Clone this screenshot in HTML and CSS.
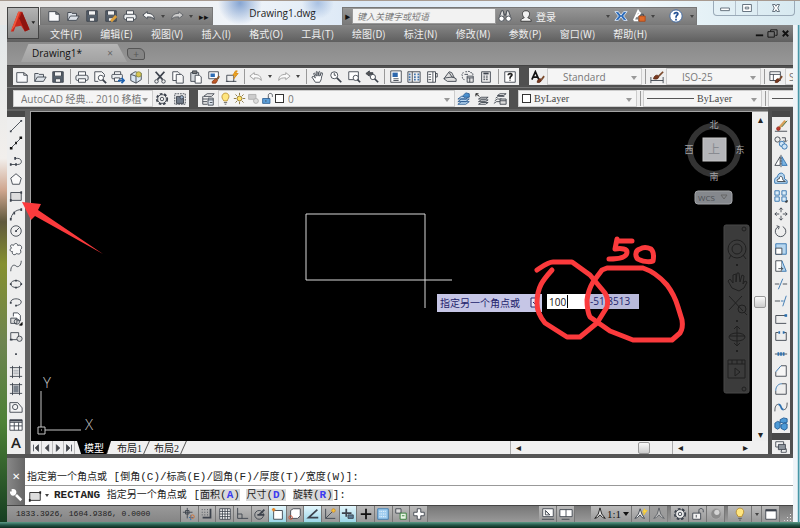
FILE: index.html
```html
<!DOCTYPE html>
<html lang="zh-CN">
<head>
    <meta charset="utf-8">
    <title>Drawing1.dwg</title>
    <link rel="stylesheet" href="styles.css">
</head>
<body>
    <!-- icon set -->
    <svg class="sprite" aria-hidden="true">
        <symbol id="new" viewBox="0 0 16 16"><path d="M2 3h8l4 3v8H2zM10 3v3h4" fill="#f7f8fa"/></symbol>
        <symbol id="open" viewBox="0 0 16 16"><path d="M2 13V4h4l1 1h5v3M2 13l3-5h10l-3 5z" fill="#dde2e8"/></symbol>
        <symbol id="save" viewBox="0 0 16 16"><path d="M2 2h12v12H2z" fill="#56616d"/><path d="M4 2h8v5H4zM5 10h6v4H5z" fill="#f4f4f4"/></symbol>
        <symbol id="saveas" viewBox="0 0 16 16"><path d="M2 2h12v12H2z" fill="#56616d"/><path d="M4 2h8v5H4zM5 10h6v4H5z" fill="#f4f4f4"/><path d="M8 14l6-6" stroke="#e0a13b" stroke-width="3"/></symbol>
        <symbol id="print" viewBox="0 0 16 16"><path d="M4 6V2h8v4" fill="#fff"/><rect x="1" y="6" width="14" height="6" rx="2" fill="#eceef0"/><path d="M4 10h8v4H4z" fill="#fff"/></symbol>
        <symbol id="preview" viewBox="0 0 16 16"><path d="M6 13H2V2h8l3 3v3" fill="#f8f8f8"/><circle cx="9" cy="9" r="3" fill="#fff"/><path d="M11 11l4 4" stroke-width="2"/></symbol>
        <symbol id="publish" viewBox="0 0 16 16"><path d="M4 5V2h7v3" fill="#fff"/><rect x="1" y="5" width="12" height="5" rx="1" fill="#eceef0"/><path d="M4 9h6v4H4z" fill="#fff"/><path d="M8 12h6M12 9l3 3-3 3" stroke="#1f62b0" stroke-width="2"/></symbol>
        <symbol id="dwf" viewBox="0 0 16 16"><path d="M2 5l5-3 7 2v7l-6 4-6-3z" fill="#dbe7f2"/><path d="M2 5l6 2v8M8 7l6-3"/><circle cx="11" cy="5" r="3" fill="#d9c552" stroke="#8a8f4a"/></symbol>
        <symbol id="cut" viewBox="0 0 16 16"><path d="M3 2l8 9M13 2L5 11" stroke-width="2"/><circle cx="4" cy="13" r="2"/><circle cx="12" cy="13" r="2"/></symbol>
        <symbol id="copy" viewBox="0 0 16 16"><path d="M2 2h6l2 2v8H2z" fill="#fff"/><path d="M6 5h6l2 2v8H6z" fill="#f6f6f6"/></symbol>
        <symbol id="paste" viewBox="0 0 16 16"><path d="M2 3h9v10H2z" fill="#d4d8dc"/><path d="M4 1h5v3H4z" fill="#777"/><path d="M7 6h5l2 2v7H7z" fill="#fff"/></symbol>
        <symbol id="match" viewBox="0 0 16 16"><path d="M2 2h11v8H2z" fill="#fff"/><path d="M4 4h5v4H4z" fill="#2e6db4" stroke="none"/><path d="M6 13l4-3 2 2-2 3H6z" fill="#c25a28" stroke="#8a3d18"/><path d="M11 11l3-4" stroke="#8a5a30" stroke-width="2"/></symbol>
        <symbol id="blocked" viewBox="0 0 16 16"><path d="M2 6h8v7H2zM1 13h3M9 13h4"/><path d="M12 1l-3 5h3l-2 4 5-6h-3l2-3z" fill="#f3a81e" stroke="#d88b14"/></symbol>
        <symbol id="undo" viewBox="0 0 16 16"><path d="M1 7l5-4v2c5 0 8 2 8 7-2-3-4-3-8-3v2z" fill="#fafafa"/></symbol>
        <symbol id="redo" viewBox="0 0 16 16"><path d="M15 7l-5-4v2c-5 0-8 2-8 7 2-3 4-3 8-3v2z" fill="#fafafa"/></symbol>
        <symbol id="pan" viewBox="0 0 16 16"><path d="M5 14L1 8c1-1 2-1 4 1L3 4c1-1 2 0 3 3V2c1-1 2 0 2 5l1-5c1-1 2 0 1 5l2-4c2 0 1 2 0 5 0 3-1 4-2 6z" fill="#fff"/></symbol>
        <symbol id="zoom" viewBox="0 0 16 16"><circle cx="6" cy="6" r="4" fill="#fff"/><path d="M6 3v3h2"/><path d="M9 9l5 5" stroke-width="2"/></symbol>
        <symbol id="zoomwin" viewBox="0 0 16 16"><path d="M2 2h11v9H2z" fill="#fff"/><circle cx="10" cy="9" r="3" fill="#fff"/><path d="M12 11l3 3" stroke-width="2"/></symbol>
        <symbol id="zoomprev" viewBox="0 0 16 16"><path d="M1 4l4-3v2h4v2H5v2z" fill="#555"/><circle cx="9" cy="8" r="3" fill="#fff"/><path d="M11 10l4 4" stroke-width="2"/></symbol>
        <symbol id="props" viewBox="0 0 16 16"><path d="M2 1h12v13H2z" fill="#fff"/><path d="M4 3h6v5H4z" fill="#2d67ac" stroke="none"/><path d="M5 10h6M5 12h6"/></symbol>
        <symbol id="dcenter" viewBox="0 0 16 16"><path d="M1 2h14v12H1zM6 2v12"/><path d="M3 4v8" stroke="#4477b0" stroke-dasharray="2 1" stroke-width="2"/><path d="M8 5h2M12 5h2M8 8h2M12 8h2M8 11h2M12 11h2" stroke="#4477b0" stroke-width="2"/></symbol>
        <symbol id="palette" viewBox="0 0 16 16"><path d="M3 2h9v12H3z" fill="#fff"/><path d="M9 2v12M4 5h3M4 8h3M4 11h3M12 4h2v4h-2z"/></symbol>
        <symbol id="sheet" viewBox="0 0 16 16"><path d="M1 10l6-8 3 1 3 6M1 10l4 3h10v-3l-4-2-8 1z" fill="#ddd"/><path d="M7 3l4 6"/></symbol>
        <symbol id="markup" viewBox="0 0 16 16"><path d="M5 2h2c2-1 4 0 4 1 3 0 3 2 2 4M3 3C0 4 1 6 2 7c-1 2 0 4 2 4" stroke-dasharray="2 1"/><path d="M7 7h7v7H7zM7 9h7M10 9v5M4 5h4" fill="#e5e5e5"/></symbol>
        <symbol id="calc" viewBox="0 0 16 16"><path d="M3 2h10v12H3z" fill="#eee"/><path d="M5 4h6" stroke-width="2"/><path d="M5 7h6M5 9h6M5 11h6" stroke-dasharray="2 1"/></symbol>
        <symbol id="help" viewBox="0 0 16 16"><path d="M2 2h12v12H2z" fill="#fff"/><path d="M6 6c0-3 5-2 4 0-1 2-2 1-2 4M8 11v1" stroke="#222" stroke-width="2"/></symbol>
        <symbol id="textstyle" viewBox="0 0 16 16"><path d="M1 11L5 2l4 9M2 8h6" stroke="#111" stroke-width="2"/><path d="M7 14c1-4 3-5 5-3 0 2-2 4-5 3z" fill="#7b3a20" stroke="#5a2815"/><path d="M12 11l3-4" stroke="#7b4a2c" stroke-width="2"/></symbol>
        <symbol id="dimstyle" viewBox="0 0 16 16"><path d="M1 8v7M15 8v7M1 12h14"/><path d="M4 10c1-4 4-5 6-3 0 3-2 4-6 3z" fill="#7b3a20" stroke="#5a2815"/><path d="M10 7l5-5" stroke="#7b4a2c" stroke-width="2"/></symbol>
        <symbol id="tabstyle" viewBox="0 0 16 16"><path d="M1 2h12v10H1zM1 5h12M5 5v7" fill="#fff"/><path d="M7 14c1-4 3-5 5-3 0 2-2 4-5 3z" fill="#7b3a20" stroke="#5a2815"/><path d="M12 11l3-4" stroke="#7b4a2c" stroke-width="2"/></symbol>
        <symbol id="gear" viewBox="0 0 16 16"><circle cx="8" cy="8" r="6" stroke-width="2" stroke-dasharray="3 2"/><circle cx="8" cy="8" r="5" fill="#eee"/><circle cx="8" cy="8" r="2"/></symbol>
        <symbol id="wsave" viewBox="0 0 16 16"><path d="M2 2h12v12H2z" stroke-dasharray="2 1"/><path d="M4 5h5l3 2v6H4z" fill="#707a88"/><circle cx="10" cy="6" r="2" fill="#9fb3cb"/></symbol>
        <symbol id="layers" viewBox="0 0 16 16"><path d="M3 5l4-3h8l-3 3zM2 5v9h5M2 8h5M2 11h5" fill="#eee"/><path d="M8 7h6v8H8zM8 9h6M10 12h3" fill="#dfe7f0"/></symbol>
        <symbol id="bulb" viewBox="0 0 16 16"><path d="M6 11C4 8 3 7 4 4c2-4 7-3 8 0 1 3-1 4-2 7z" fill="#ffe680" stroke="#b58a2c"/><path d="M6 13h4M7 15h2" stroke="#555"/></symbol>
        <symbol id="sun" viewBox="0 0 16 16"><circle cx="8" cy="8" r="3" fill="#ffe36a" stroke="#8a6d20"/><path d="M8 1v3M8 12v3M1 8h3M12 8h3M3 3l2 2M11 11l2 2M13 3l-2 2M5 11l-2 2" stroke="#7a6525"/></symbol>
        <symbol id="freeze" viewBox="0 0 16 16"><path d="M2 3h9v6H2z" fill="#ccc" stroke="#aaa"/><circle cx="11" cy="11" r="3" fill="#ddd" stroke="#aaa"/></symbol>
        <symbol id="unlock" viewBox="0 0 16 16"><path d="M2 8h9v6H2z" fill="#5ea0da" stroke="#2a5c90"/><path d="M9 8V4c0-3 5-3 5 0v2M6 10v2"/></symbol>
        <symbol id="padlock" viewBox="0 0 16 16"><path d="M2 7h9v7H2z" fill="#f2f2f2"/><path d="M9 7V4c0-3 5-3 5 0v2M6 9v3"/></symbol>
        <symbol id="laycur" viewBox="0 0 16 16"><path d="M1 8l4-3h9l-4 3zM1 11l4-3h9l-4 3zM1 14l4-3h9l-4 3z" fill="#bcd9f2" stroke="#2b5d94"/><path d="M7 4l3-3 4 1v4H8z" fill="#4b91cf" stroke="#2b5d94"/></symbol>
        <symbol id="layprev" viewBox="0 0 16 16"><path d="M4 8l3-2h8l-3 2zM4 11l3-2h8l-3 2zM4 14l3-2h8l-3 2z" fill="#eee"/><path d="M1 2l4 3M1 2h3M1 2v3" stroke="#111"/></symbol>
        <symbol id="laystate" viewBox="0 0 16 16"><path d="M5 4l3-2h7l-3 2zM3 7l3-2h7M2 10l3-2h5M1 13l3-2h4" fill="#eee"/><path d="M8 8h7v6H8zM8 10h7" fill="#ddd"/></symbol>

        <symbol id="line" viewBox="0 0 16 16"><path d="M2 14L14 2"/><path d="M1 14h2M13 2h2" stroke-width="2"/></symbol>
        <symbol id="xline" viewBox="0 0 16 16"><path d="M2 14L14 2"/><path d="M1 14h3M7 8h2M12 2h3" stroke-width="3" stroke="#111"/></symbol>
        <symbol id="pline" viewBox="0 0 16 16"><path d="M2 12h8c6 0 5-7 0-7H7"/><path d="M1 12h2M7 12h2M6 5h2" stroke-width="3"/></symbol>
        <symbol id="polygon" viewBox="0 0 16 16"><path d="M8 2l6 5-2 7H4L2 7z" fill="#fafafa"/></symbol>
        <symbol id="rect" viewBox="0 0 16 16"><path d="M2 4h12v9H2z" fill="#ddd"/><path d="M1 13h2M13 4h2" stroke-width="3"/></symbol>
        <symbol id="arc" viewBox="0 0 16 16"><path d="M2 14C3 8 7 3 14 3"/><path d="M1 14h2M5 7h2M13 3h2" stroke-width="3"/></symbol>
        <symbol id="circle" viewBox="0 0 16 16"><circle cx="8" cy="8" r="6"/><path d="M8 8l4-4"/><path d="M7 8h2" stroke-width="2"/></symbol>
        <symbol id="cloud" viewBox="0 0 16 16"><path d="M5 4c1-3 5-3 5 0 4-2 6 3 3 5 2 4-2 6-4 4-3 3-6 1-5-2C0 11 1 7 3 7 0 4 3 2 5 4z" fill="#fafafa"/></symbol>
        <symbol id="spline" viewBox="0 0 16 16"><path d="M2 14c0-7 4-8 6-6s6 0 6-6"/></symbol>
        <symbol id="ellipse" viewBox="0 0 16 16"><ellipse cx="8" cy="8" rx="6" ry="4"/><path d="M1 8h2M13 8h2M8 3v2M7 12h2" stroke-width="2"/></symbol>
        <symbol id="elarc" viewBox="0 0 16 16"><path d="M2 9c-1-6 12-6 12-1 0 3-4 4-6 4"/><path d="M1 9h2M7 12h2" stroke-width="2"/></symbol>
        <symbol id="insert" viewBox="0 0 16 16"><path d="M5 5V1h5l3 3v6H9" fill="#fff"/><path d="M2 7h7v6H2z" fill="#ddd"/><circle cx="9" cy="11" r="3"/><path d="M12 15h3v-3z" fill="#111" stroke="#111"/></symbol>
        <symbol id="mkblock" viewBox="0 0 16 16"><path d="M2 3h9v8H2z" fill="#eee"/><circle cx="12" cy="10" r="3" fill="#ddd"/><path d="M1 11h3" stroke-width="2"/></symbol>
        <symbol id="point" viewBox="0 0 16 16"><path d="M7 8h2" stroke-width="2"/></symbol>
        <symbol id="hatch" viewBox="0 0 16 16"><path d="M4 1v14M12 1v14M1 3h14M1 13h14"/><path d="M5 6h6M5 8h6M5 10h6" stroke="#9aa0a8"/></symbol>
        <symbol id="gradient" viewBox="0 0 16 16"><path d="M4 1v14M12 1v14M1 3h14M1 13h14"/><path d="M5 4h6v8H5z" fill="#7a828c" stroke="none"/></symbol>
        <symbol id="region" viewBox="0 0 16 16"><path d="M1 14V3h9l5 6v5z" fill="#f4f4f4"/><circle cx="7" cy="8" r="3"/></symbol>
        <symbol id="table" viewBox="0 0 16 16"><path d="M1 2h14v12H1zM1 5h14M1 9h14M6 5v9M11 5v9" fill="#fff"/><path d="M1 3h14" stroke-width="2"/></symbol>

        <symbol id="erase" viewBox="0 0 16 16"><path d="M1 14h14"/><path d="M6 10l7-8" stroke="#d8a05a" stroke-width="3"/><path d="M9 9l6-7" stroke="#3c6b3a"/><circle cx="5" cy="11" r="2" fill="#c4392b" stroke="#8c2b20"/></symbol>
        <symbol id="mcopy" viewBox="0 0 16 16"><circle cx="4" cy="4" r="3"/><circle cx="9" cy="9" r="3" fill="#cfe4f5" stroke="#2d6fad"/><circle cx="12" cy="12" r="3" fill="#cfe4f5" stroke="#2d6fad"/><path d="M9 2h4v4M11 5l2 2 2-2"/></symbol>
        <symbol id="mirror" viewBox="0 0 16 16"><path d="M7 3v10H1z" fill="#fff"/><path d="M9 3v10h6z" fill="#7db4e2" stroke="#2d6fad"/><path d="M8 1v14" stroke-dasharray="2 1"/></symbol>
        <symbol id="offset" viewBox="0 0 16 16"><path d="M1 14h14v-3l-3-2c1-9-8-8-8-2-3 0-4 3-3 7z" fill="#b7d6ef" stroke="#2d6fad"/><path d="M4 12h9l-3-2c0-5-4-5-4-1-2 0-3 1-2 3z" fill="#fff"/></symbol>
        <symbol id="array" viewBox="0 0 16 16"><path d="M1 2h5v5H1zM9 2h5v5H9zM1 9h5v5H1zM9 9h5v5H9z" fill="#dcecf8" stroke="#2d6fad"/><path d="M13 15h2v-2z" stroke="#111"/></symbol>
        <symbol id="move" viewBox="0 0 16 16"><path d="M8 1v5M8 10v5M1 8h5M10 8h5M6 3l2-2 2 2M6 13l2 2 2-2M3 6L1 8l2 2M13 6l2 2-2 2"/></symbol>
        <symbol id="rotate" viewBox="0 0 16 16"><path d="M5 3a6 6 0 1 0 5 0M3 2l3 1-1 3"/></symbol>
        <symbol id="scale" viewBox="0 0 16 16"><path d="M2 2h12v12H2z" fill="#b7d6ef" stroke="#2d6fad"/><path d="M2 7h7v7H2z" fill="#fff"/></symbol>
        <symbol id="stretch" viewBox="0 0 16 16"><path d="M2 2h7v12H2z" fill="#fff"/><path d="M9 2l5 12H9" fill="#b7d6ef" stroke="#2d6fad"/><path d="M5 11h5M8 9l2 2-2 2"/></symbol>
        <symbol id="trim" viewBox="0 0 16 16"><path d="M1 8h5M10 8h5"/><path d="M5 14l5-12" stroke="#2d6fad"/></symbol>
        <symbol id="extend" viewBox="0 0 16 16"><path d="M1 8h6"/><path d="M8 8h3M10 14l4-12" stroke="#2d6fad"/></symbol>
        <symbol id="breakpt" viewBox="0 0 16 16"><path d="M14 4H2v9h12"/><path d="M12 4h3" stroke="#2d6fad" stroke-width="3"/></symbol>
        <symbol id="break" viewBox="0 0 16 16"><path d="M5 4H2v9h12V4h-3"/><path d="M5 4h2M10 4h2" stroke="#2d6fad" stroke-width="3"/></symbol>
        <symbol id="join" viewBox="0 0 16 16"><path d="M1 8h14"/><path d="M5 6v4M8 6v4M11 6v4" stroke="#2d6fad" stroke-width="2"/></symbol>
        <symbol id="chamfer" viewBox="0 0 16 16"><path d="M2 14V9M8 2h6v12H2" fill="#f6f6f6"/><path d="M2 9l6-7" stroke="#2d6fad"/></symbol>
        <symbol id="fillet" viewBox="0 0 16 16"><path d="M2 14v-4M9 2h5v12H2"/><path d="M2 10c0-5 3-8 7-8" stroke="#2d6fad"/></symbol>
        <symbol id="blend" viewBox="0 0 16 16"><path d="M1 13c0-5 1-8 4-8M11 11c3 0 4-3 4-8"/><path d="M5 5c4 0 2 6 6 6" stroke="#2d6fad" stroke-width="2"/></symbol>
        <symbol id="explode" viewBox="0 0 16 16"><path d="M1 7l3-2 3 1v6l-3 2-3-2zM7 3l4-2 4 1v4l-4 1-4-1zM8 9l4-2 3 1v5l-3 2-4-2z" fill="#4e9ad6" stroke="#205a92"/></symbol>
        <symbol id="order" viewBox="0 0 16 16"><path d="M2 2h9v6H2zM9 10h5v4H8z" fill="#fff"/><path d="M5 5h8v6H5z" fill="#8d949c"/></symbol>

        <symbol id="infer" viewBox="0 0 16 16"><path d="M6 1v12M1 6h11M4 4h4v4H4z"/><path d="M10 9v6M8 12h5" stroke="#2d6fad"/><circle cx="12" cy="11" r="2" stroke="#d36b2a"/></symbol>
        <symbol id="snap" viewBox="0 0 16 16"><path d="M2 3h8M2 6h8M2 9h8" stroke-dasharray="1 2"/><path d="M12 2v10H3" stroke-width="2"/></symbol>
        <symbol id="grid" viewBox="0 0 16 16"><path d="M2 2h12v12H2zM5 2v12M8 2v12M11 2v12M2 5h12M2 8h12M2 11h12" fill="#fff"/></symbol>
        <symbol id="ortho" viewBox="0 0 16 16"><path d="M3 1v12h12M3 8h5v5"/></symbol>
        <symbol id="polar" viewBox="0 0 16 16"><circle cx="7" cy="9" r="5"/><path d="M5 9h8M7 9l6-6" stroke-width="2"/></symbol>
        <symbol id="osnap" viewBox="0 0 16 16"><path d="M3 4h10v10H3z" fill="#fff"/><path d="M1 3h4M3 1v4" stroke="#e3882c" stroke-width="2"/></symbol>
        <symbol id="osnap3" viewBox="0 0 16 16"><path d="M3 4l3-2h8v8l-3 3H3z" fill="#fff"/><circle cx="3" cy="12" r="2" stroke="#cf4c2c"/></symbol>
        <symbol id="otrack" viewBox="0 0 16 16"><path d="M13 3L3 12h11" stroke-width="2"/></symbol>
        <symbol id="ducs" viewBox="0 0 16 16"><path d="M3 2v11h11M3 13l8-8"/><circle cx="12" cy="4" r="2" fill="#f4c53a" stroke="#cf8a2c"/></symbol>
        <symbol id="dyn" viewBox="0 0 16 16"><path d="M6 2v9M1 7h11" stroke-width="2"/><path d="M8 9h6v4H8z" fill="#5a7b94"/></symbol>
        <symbol id="lwt" viewBox="0 0 16 16"><path d="M8 2v12M2 8h12" stroke="#111" stroke-width="2"/></symbol>
        <symbol id="tpy" viewBox="0 0 16 16"><path d="M2 2h12v12H2z" fill="#9fcdf0" stroke="#3a78ad"/><path d="M4 5h8M4 8h8M4 11h8" stroke="#fff" stroke-dasharray="1 1"/></symbol>
        <symbol id="qp" viewBox="0 0 16 16"><path d="M2 2h6v5H2z" fill="#ddd"/><path d="M7 7h7v7H7zM9 10h3" fill="#e9f5e6" stroke="#2f7d32"/></symbol>
        <symbol id="plus" viewBox="0 0 16 16"><path d="M6 2h4v4h4v4h-4v4H6v-4H2V6h4z" fill="#fff"/></symbol>
        <symbol id="model" viewBox="0 0 16 16"><path d="M2 2h12v9H2zM1 14h14" fill="#fff"/><path d="M5 4v5h5zM5 4l5 5"/></symbol>
        <symbol id="layouts" viewBox="0 0 16 16"><path d="M1 3h14v8H1zM8 3v8M3 14h9" fill="#fff"/></symbol>
        <symbol id="anno" viewBox="0 0 16 16"><path d="M8 1l2 7 4 5-3-1-3-3-3 3-3 1 4-5z" fill="#e8e8e8"/></symbol>
        <symbol id="annovis" viewBox="0 0 16 16"><path d="M7 2l2 6 3 5-3-1-2-3-3 3-3 1 4-5z" fill="#eee"/><path d="M12 2l-2 4h2l-1 3 4-5h-2z" fill="#ffdc4a" stroke="#f2c832"/></symbol>
        <symbol id="iso" viewBox="0 0 16 16"><circle cx="8" cy="8" r="6" fill="#8b8b8b" stroke="#aaa"/><circle cx="9" cy="6" r="3" fill="#d4d4d4" stroke="none"/></symbol>
        <symbol id="clean" viewBox="0 0 16 16"><path d="M2 3h12v11H2z" fill="#fff"/><path d="M2 4h12" stroke-width="2"/></symbol>
        <symbol id="wrench" viewBox="0 0 16 16"><path d="M8 8l6 6" stroke="#fff" stroke-width="3"/><path d="M3 1v3H1c0 4 3 6 6 4 3-3 1-7-2-7z" fill="#fff" stroke="none"/></symbol>
        <symbol id="binoc" viewBox="0 0 16 16"><path d="M2 8l2-6h2l1 6M9 8l1-6h2l2 6M7 6h2" fill="#ddd"/><circle cx="4" cy="11" r="3" fill="#fff"/><circle cx="12" cy="11" r="3" fill="#fff"/></symbol>
        <symbol id="user" viewBox="0 0 16 16"><path d="M2 14c0-3 2-3 4-4-3-3-3-8 2-8s5 5 2 8c2 1 4 1 4 4z" fill="#f2f2f2"/></symbol>
        <symbol id="exchange" viewBox="0 0 16 16"><path d="M1 3h4l3 4 3-4h4l-4 5 4 5h-4L8 9l-3 4H1l4-5z" fill="#2d6cba" stroke="#dfeafa"/></symbol>
        <symbol id="a360" viewBox="0 0 16 16"><path d="M2 13L7 2l3 5M2 13h5M5 9l5-5" stroke="#fff" stroke-width="2"/><path d="M8 8h7v6H8z" fill="#df6a2a" stroke="#a9481a"/><path d="M10 8V6h3v2"/></symbol>
        <symbol id="qmark" viewBox="0 0 16 16"><circle cx="8" cy="8" r="7" fill="#fff" stroke="#3a68a8"/><path d="M6 6c0-3 5-2 4 0-1 2-2 1-2 4M8 11v2" stroke="#245296" stroke-width="2"/></symbol>
    </svg>

    <div class="window">
        <header class="titlebar">
            <div class="quick">
                <button aria-label="新建"><svg><use href="#new"/></svg></button>
                <button aria-label="打开"><svg><use href="#open"/></svg></button>
                <button aria-label="保存"><svg><use href="#save"/></svg></button>
                <button aria-label="另存为"><svg><use href="#saveas"/></svg></button>
                <button aria-label="打印"><svg><use href="#print"/></svg></button>
                <button aria-label="放弃"><svg><use href="#undo"/></svg></button>
                <button class="drop" aria-label="放弃列表"></button>
                <button class="pale" aria-label="重做"><svg><use href="#redo"/></svg></button>
                <button class="drop" aria-label="重做列表"></button>
                <button class="more" aria-label="更多">▸▸</button>
            </div>
            <h1>Drawing1.dwg</h1>
            <div class="info">
                <button class="play" aria-label="展开">▶</button>
                <input type="text" placeholder="键入关键字或短语" aria-label="搜索">
                <button aria-label="搜索"><svg><use href="#binoc"/></svg></button>
                <button class="login"><svg><use href="#user"/></svg>登录</button>
                <button class="drop" aria-label="登录选项"></button>
                <button aria-label="Exchange"><svg><use href="#exchange"/></svg></button>
                <button aria-label="连接"><svg><use href="#a360"/></svg></button>
                <button class="drop" aria-label="连接选项"></button>
                <button class="about" aria-label="帮助"><svg><use href="#qmark"/></svg></button>
                <button class="drop" aria-label="帮助选项"></button>
            </div>
            <div class="winbtns">
                <button aria-label="最小化"><svg viewBox="0 0 16 12"><path d="M3 6h10v3H3z" fill="#fff"/></svg></button>
                <button aria-label="还原"><svg viewBox="0 0 16 12"><path d="M3 2h10v8H3zM6 5h4v2H6z" fill="#fff"/></svg></button>
                <button class="close" aria-label="关闭"><svg viewBox="0 0 16 12"><path d="M4 2h3l1 2 1-2h3l-2 4 2 4H9L8 8l-1 2H4l2-4z" fill="#fff"/></svg></button>
            </div>
        </header>
        <nav class="menubar">
            <a href="#">文件(F)</a>
            <a href="#">编辑(E)</a>
            <a href="#">视图(V)</a>
            <a href="#">插入(I)</a>
            <a href="#">格式(O)</a>
            <a href="#">工具(T)</a>
            <a href="#">绘图(D)</a>
            <a href="#">标注(N)</a>
            <a href="#">修改(M)</a>
            <a href="#">参数(P)</a>
            <a href="#">窗口(W)</a>
            <a href="#">帮助(H)</a>
            <div class="docbtns">
                <button aria-label="最小化"><svg viewBox="0 0 12 12"><path d="M2 8h8"/></svg></button>
                <button aria-label="还原"><svg viewBox="0 0 12 12"><path d="M4 4V2h7v6H9M1 4h7v6H1z" stroke-width="1"/></svg></button>
                <button aria-label="关闭"><svg viewBox="0 0 12 12"><path d="M3 3l6 6M9 3l-6 6"/></svg></button>
            </div>
        </nav>
        <button class="appbtn" aria-label="应用程序菜单">
            <svg viewBox="0 0 32 32">
                <path d="M3 25L11 4h4l8 19-5 2-4-6-6 1-2 5z" fill="#c8281c" stroke="none"/>
                <path d="M11 4h2L7 20l-4 5z" fill="#f0563c" stroke="none"/>
                <path d="M15 4l8 19-5 2-6-14z" fill="#8e1510" stroke="none"/>
                <path d="M25 14h4l-2 3z" fill="#222" stroke="none"/>
            </svg>
        </button>
        <div class="filetabs">
            <div class="filetab"><span>Drawing1*</span><button aria-label="关闭图形">×</button></div>
            <button class="addtab" aria-label="新图形">+</button>
        </div>

        <div class="bars">
            <div class="bar standard">
                <button aria-label="新建"><svg><use href="#new"/></svg></button>
                <button aria-label="打开"><svg><use href="#open"/></svg></button>
                <button aria-label="保存"><svg><use href="#save"/></svg></button>
                <i class="sep"></i>
                <button aria-label="打印"><svg><use href="#print"/></svg></button>
                <button aria-label="打印预览"><svg><use href="#preview"/></svg></button>
                <button aria-label="发布"><svg><use href="#publish"/></svg></button>
                <button aria-label="三维DWF"><svg><use href="#dwf"/></svg></button>
                <i class="sep"></i>
                <button aria-label="剪切"><svg><use href="#cut"/></svg></button>
                <button aria-label="复制"><svg><use href="#copy"/></svg></button>
                <button aria-label="粘贴"><svg><use href="#paste"/></svg></button>
                <button aria-label="特性匹配"><svg><use href="#match"/></svg></button>
                <button aria-label="块编辑器"><svg><use href="#blocked"/></svg></button>
                <i class="sep"></i>
                <button class="dim" aria-label="放弃"><svg><use href="#undo"/></svg></button>
                <button class="drop" aria-label="放弃列表"></button>
                <button class="dim" aria-label="重做"><svg><use href="#redo"/></svg></button>
                <button class="drop" aria-label="重做列表"></button>
                <i class="sep"></i>
                <button aria-label="平移"><svg><use href="#pan"/></svg></button>
                <button aria-label="实时缩放"><svg><use href="#zoom"/></svg></button>
                <button aria-label="窗口缩放"><svg><use href="#zoomwin"/></svg></button>
                <button aria-label="缩放上一个"><svg><use href="#zoomprev"/></svg></button>
                <i class="sep"></i>
                <button aria-label="特性"><svg><use href="#props"/></svg></button>
                <button aria-label="设计中心"><svg><use href="#dcenter"/></svg></button>
                <button aria-label="工具选项板"><svg><use href="#palette"/></svg></button>
                <button aria-label="图纸集"><svg><use href="#sheet"/></svg></button>
                <button aria-label="标记集"><svg><use href="#markup"/></svg></button>
                <button aria-label="计算器"><svg><use href="#calc"/></svg></button>
                <i class="sep"></i>
                <button aria-label="帮助"><svg><use href="#help"/></svg></button>
            </div>
            <div class="bar styles">
                <button aria-label="文字样式"><svg><use href="#textstyle"/></svg></button>
                <label class="combo"><select aria-label="文字样式"><option>Standard</option></select></label>
                <i class="sep"></i>
                <button aria-label="标注样式"><svg><use href="#dimstyle"/></svg></button>
                <label class="combo"><select aria-label="标注样式"><option>ISO-25</option></select></label>
                <i class="sep"></i>
                <button aria-label="表格样式"><svg><use href="#tabstyle"/></svg></button>
                <label class="combo cut"><select aria-label="表格样式"><option>Standard</option></select></label>
            </div>
        </div>
        <div class="bars second">
            <div class="bar workspace">
                <label class="combo"><select aria-label="工作空间"><option>AutoCAD 经典... 2010 移植</option></select></label>
                <button aria-label="工作空间设置"><svg><use href="#gear"/></svg></button>
                <button aria-label="我的工作空间"><svg><use href="#wsave"/></svg></button>
            </div>
            <div class="bar layer">
                <button aria-label="图层特性"><svg><use href="#layers"/></svg></button>
                <label class="combo">
                    <svg><use href="#bulb"/></svg>
                    <svg><use href="#sun"/></svg>
                    <svg><use href="#freeze"/></svg>
                    <svg><use href="#unlock"/></svg>
                    <i class="swatch"></i>
                    <select aria-label="图层"><option>0</option></select>
                </label>
                <button aria-label="置为当前"><svg><use href="#laycur"/></svg></button>
                <button aria-label="上一个图层"><svg><use href="#layprev"/></svg></button>
                <button aria-label="图层状态"><svg><use href="#laystate"/></svg></button>
            </div>
            <div class="bar props">
                <label class="combo"><i class="swatch"></i><select aria-label="颜色"><option>ByLayer</option></select></label>
                <i class="sep"></i>
                <label class="combo"><i class="stroke"></i><select aria-label="线型"><option>ByLayer</option></select></label>
                <i class="sep"></i>
                <label class="combo cut"><i class="stroke"></i><select aria-label="线宽"><option>ByLayer</option></select></label>
            </div>
        </div>

        <main class="work">
            <div class="tools draw">
                <button aria-label="直线"><svg><use href="#line"/></svg></button>
                <button aria-label="构造线"><svg><use href="#xline"/></svg></button>
                <button aria-label="多段线"><svg><use href="#pline"/></svg></button>
                <button aria-label="多边形"><svg><use href="#polygon"/></svg></button>
                <button aria-label="矩形"><svg><use href="#rect"/></svg></button>
                <button aria-label="圆弧"><svg><use href="#arc"/></svg></button>
                <button aria-label="圆"><svg><use href="#circle"/></svg></button>
                <button aria-label="修订云线"><svg><use href="#cloud"/></svg></button>
                <button aria-label="样条曲线"><svg><use href="#spline"/></svg></button>
                <button aria-label="椭圆"><svg><use href="#ellipse"/></svg></button>
                <button aria-label="椭圆弧"><svg><use href="#elarc"/></svg></button>
                <button aria-label="插入块"><svg><use href="#insert"/></svg></button>
                <button aria-label="创建块"><svg><use href="#mkblock"/></svg></button>
                <button aria-label="点"><svg><use href="#point"/></svg></button>
                <button aria-label="图案填充"><svg><use href="#hatch"/></svg></button>
                <button aria-label="渐变色"><svg><use href="#gradient"/></svg></button>
                <button aria-label="面域"><svg><use href="#region"/></svg></button>
                <button aria-label="表格"><svg><use href="#table"/></svg></button>
                <button class="mtext" aria-label="多行文字">A</button>
            </div>

            <section class="view">
                <div class="canvas">
                    <svg class="drawing" viewBox="31 112 721 329" width="721" height="329">
                        <path d="M306 214h119v66H306zM425 280h27M425 280v28" stroke="#d8d8d8"/>
                        <path d="M41 391v36M45 430h36M38 427h7v7h-7zM41 430h1" stroke="#c4c4c4"/>
                        <text x="43" y="388" font-size="15" font-weight="300" fill="#c4c4c4">Y</text>
                        <text x="85" y="430" font-size="15" font-weight="300" fill="#c4c4c4">X</text>
                        <!-- view cube -->
                        <circle cx="714" cy="150" r="24" stroke="#333" stroke-width="6"/>
                        <rect x="703" y="138" width="23" height="23" fill="#b4b5b9" stroke="#c8c8c8"/>
                        <g font-size="9" fill="#a4a4a4" text-anchor="middle">
                            <text x="714" y="128">北</text>
                            <text x="689" y="153">西</text>
                            <text x="740" y="153">东</text>
                            <text x="714" y="180">南</text>
                            <text x="714" y="154" font-size="12" fill="#888a90">上</text>
                        </g>
                        <rect x="695" y="191" width="37" height="13" rx="3" fill="#85888d" stroke="#a3a5a8"/>
                        <text x="698" y="201" font-size="8" fill="#4b4e52">WCS</text>
                        <path d="M721 195h6l-3 4z" stroke="#666"/>
                        <!-- navigation bar -->
                        <rect x="724" y="225" width="25" height="168" rx="2" fill="#3b3b3b" stroke="#484848"/>
                        <g stroke="#202020">
                            <circle cx="744" cy="229" r="2"/>
                            <circle cx="737" cy="249" r="9"/><circle cx="737" cy="249" r="5"/><path d="M731 255l-2 4M743 255l3 4"/>
                            <path d="M737 264v2M737 320v2M737 350v2" stroke-width="2"/>
                            <path d="M732 288l-4-7 2-2 3 4v-8l3-1v8l1-9h2l1 9 2-7 2 1-1 8 2-3 2 1-3 6-5 3z"/>
                            <path d="M729 296l14 15M742 296l-13 14"/><circle cx="742" cy="309" r="4"/><path d="M744 312l3 3"/>
                            <path d="M737 326v20M729 336h16M734 329l3-3 3 3M734 343l3 3 3-3"/><ellipse cx="737" cy="337" rx="8" ry="4"/>
                            <path d="M728 360h17v18h-17zM728 364h17M732 360v4M737 360v4M742 360v4M735 368l5 4-5 4z"/>
                            <circle cx="744" cy="389" r="2"/>
                        </g>
                    </svg>
                    <div class="dynamic">
                        <span class="prompt">指定另一个角点或 <svg viewBox="0 0 10 12"><path d="M1 1h7v9H1zM3 5l2 2 2-2" fill="#e6e6f6"/></svg></span>
                        <input type="text" value="100" aria-label="宽度">
                        <i class="caret"></i>
                        <output>-51.8513</output>
                    </div>
                </div>
                <div class="vscroll">
                    <button aria-label="向上">▴</button>
                    <i class="thumb"></i>
                    <button aria-label="向下">▾</button>
                </div>
                <div class="layouts">
                    <div class="steps">
                        <button aria-label="第一个"><svg viewBox="0 0 12 12"><path d="M3 2v8"/><path d="M9 2v8L5 6z" fill="#444"/></svg></button>
                        <button aria-label="上一个"><svg viewBox="0 0 12 12"><path d="M8 2v8L4 6z" fill="#444"/></svg></button>
                        <button aria-label="下一个"><svg viewBox="0 0 12 12"><path d="M4 2v8l4-4z" fill="#444"/></svg></button>
                        <button aria-label="最后一个"><svg viewBox="0 0 12 12"><path d="M9 2v8"/><path d="M3 2v8l4-4z" fill="#444"/></svg></button>
                    </div>
                    <button class="ltab on">模型</button>
                    <button class="ltab">布局1</button>
                    <button class="ltab">布局2</button>
                    <div class="hscroll">
                        <button aria-label="向左">◂</button>
                        <i class="thumb"></i>
                    </div>
                    <div class="hscroll end">
                        <button aria-label="向左">◂</button>
                        <button aria-label="向右">▸</button>
                    </div>
                </div>
            </section>

            <div class="right">
                <div class="tools modify">
                    <button aria-label="删除"><svg><use href="#erase"/></svg></button>
                    <button aria-label="复制"><svg><use href="#mcopy"/></svg></button>
                    <button aria-label="镜像"><svg><use href="#mirror"/></svg></button>
                    <button aria-label="偏移"><svg><use href="#offset"/></svg></button>
                    <button aria-label="阵列"><svg><use href="#array"/></svg></button>
                    <button aria-label="移动"><svg><use href="#move"/></svg></button>
                    <button aria-label="旋转"><svg><use href="#rotate"/></svg></button>
                    <button aria-label="缩放"><svg><use href="#scale"/></svg></button>
                    <button aria-label="拉伸"><svg><use href="#stretch"/></svg></button>
                    <button aria-label="修剪"><svg><use href="#trim"/></svg></button>
                    <button aria-label="延伸"><svg><use href="#extend"/></svg></button>
                    <button aria-label="打断于点"><svg><use href="#breakpt"/></svg></button>
                    <button aria-label="打断"><svg><use href="#break"/></svg></button>
                    <button aria-label="合并"><svg><use href="#join"/></svg></button>
                    <button aria-label="倒角"><svg><use href="#chamfer"/></svg></button>
                    <button aria-label="圆角"><svg><use href="#fillet"/></svg></button>
                    <button aria-label="光顺曲线"><svg><use href="#blend"/></svg></button>
                    <button aria-label="分解"><svg><use href="#explode"/></svg></button>
                </div>
                <div class="tools order">
                    <button aria-label="绘图次序"><svg><use href="#order"/></svg></button>
                </div>
            </div>
        </main>

        <section class="command">
            <div class="grip">
                <button aria-label="关闭">✕</button>
                <button aria-label="自定义"><svg><use href="#wrench"/></svg></button>
            </div>
            <div class="lines">
                <p class="history"><b>指定第一个角点或</b> [<b>倒角</b>(C)/<b>标高</b>(E)/<b>圆角</b>(F)/<b>厚度</b>(T)/<b>宽度</b>(W)]:</p>
                <p class="current"><svg><use href="#rect"/></svg><i class="drop"></i><span><strong>RECTANG</strong> <b>指定另一个角点或</b> [<a href="#"><b>面积</b>(<em>A</em>)</a> <a href="#"><b>尺寸</b>(<em>D</em>)</a> <a href="#"><b>旋转</b>(<em>R</em>)</a>]:</span></p>
            </div>
        </section>

        <footer class="status">
            <span class="coords">1833.3926, 1604.9386, 0.0000</span>
            <div class="toggles modes">
                <button aria-label="推断约束"><svg><use href="#infer"/></svg></button>
                <button aria-label="捕捉"><svg><use href="#snap"/></svg></button>
                <button aria-label="栅格"><svg><use href="#grid"/></svg></button>
                <button aria-label="正交"><svg><use href="#ortho"/></svg></button>
                <button aria-label="极轴"><svg><use href="#polar"/></svg></button>
                <button class="on" aria-label="对象捕捉"><svg><use href="#osnap"/></svg></button>
                <button aria-label="三维对象捕捉"><svg><use href="#osnap3"/></svg></button>
                <button class="on" aria-label="对象追踪"><svg><use href="#otrack"/></svg></button>
                <button aria-label="动态UCS"><svg><use href="#ducs"/></svg></button>
                <button class="on" aria-label="动态输入"><svg><use href="#dyn"/></svg></button>
                <button aria-label="线宽"><svg><use href="#lwt"/></svg></button>
                <button aria-label="透明度"><svg><use href="#tpy"/></svg></button>
                <button aria-label="快捷特性"><svg><use href="#qp"/></svg></button>
                <button aria-label="选择循环"><svg><use href="#plus"/></svg></button>
            </div>
            <div class="toggles space">
                <button aria-label="模型"><svg><use href="#model"/></svg></button>
                <button aria-label="布局"><svg><use href="#layouts"/></svg></button>
            </div>
            <div class="toggles">
                <button class="scale"><svg><use href="#anno"/></svg>1:1<i class="tri"></i></button>
                <button aria-label="注释可见性"><svg><use href="#annovis"/></svg></button>
                <button class="pale" aria-label="自动缩放"><svg><use href="#anno"/></svg></button>
            </div>
            <div class="toggles">
                <button aria-label="切换工作空间"><svg><use href="#gear"/></svg></button>
                <button aria-label="锁定"><svg><use href="#padlock"/></svg></button>
                <button aria-label="硬件加速"><svg><use href="#iso"/></svg></button>
            </div>
            <div class="toggles">
                <button class="wide" aria-label="隔离对象"><svg><use href="#bulb"/></svg></button>
                <button class="drop" aria-label="状态栏菜单"></button>
                <button aria-label="全屏显示"><svg><use href="#clean"/></svg></button>
            </div>
            <i class="sizer"></i>
        </footer>

        <!-- red pen marks -->
        <svg class="marks" viewBox="0 0 800 528" width="800" height="528" aria-hidden="true">
            <path d="M22 202l19 2-3 6 65 44-68-38-4 4z" fill="#fb3a3c" stroke="none"/>
            <path d="M537 270c6-4 11-8 16-8h19l18 13 15 18c3 5 3 10 2 14l-10 16-17 14h-13l-22-14c-5-6-8-13-8-20 0-16 6-23 15-33"/>
            <path d="M602 270l5-2h36c9 3 18 10 24 17 6 8 9 15 11 22l4 13c1 6 0 10-2 13l-8 7h-39l-23-9-20-14c-3-6-3-12-3-17 1-8 3-13 6-18z"/>
            <path d="M632 241h-15v-2l-2 10c7-1 12 0 12 3 0 5-6 7-18 7"/>
            <path d="M640 249c-5 1-6 9 0 11 4 2 11 2 13 1 1-5 1-9-2-12-4-2-8-2-11 0"/>
        </svg>
    </div>
</body>
</html>
```

FILE: styles.css
```css
* {
    box-sizing: border-box;
}

body {
    margin: 0;
    font-family: "Open Sans", "Noto Sans CJK SC", sans-serif;
    font-size: 10px;
    color: #3c424c;
}

button {
    display: flex;
    justify-content: center;
    align-items: center;
    flex: none;
    padding: 0;
    border: none;
    background: none;
    font: inherit;
    color: inherit;
}

svg {
    display: block;
    flex: none;
    width: 14px;
    height: 14px;
    fill: none;
    stroke: currentColor;
}

svg text {
    stroke: none;
}

a {
    color: inherit;
    text-decoration: none;
}

.sprite {
    position: absolute;
    width: 0;
    height: 0;
}

.window {
    position: relative;
    display: flex;
    flex-direction: column;
    min-height: 100vh;
    padding: 0 7px 6px;
    overflow: hidden;
    background:
        linear-gradient(#5b9a86, #24584a 50%, #0c2a1c) 0 100% / 100% 6px no-repeat,
        linear-gradient(90deg, #eef4f8 60%, #3b8fa0 80%, #cfe6ee) 100% 0 / 7px 100% no-repeat,
        linear-gradient(#dfe5e8, #f2efec 30%, #cfa68f 36%, #5f583c 42%, #85902f 50%, #6d8450 65%, #4d8136 80%, #123a20) 0 0 / 7px 100% no-repeat,
        #636363;
}

/* title bar */
.titlebar {
    display: flex;
    align-items: flex-end;
    height: 25px;
    margin: 0 -7px;
    padding: 0 5px 0 40px;
    border-top: 1px solid #a79a90;
    background:
        radial-gradient(circle at 240px 2px, #86a5d2, transparent 22px),
        radial-gradient(circle at 318px 2px, #a9c1e2, transparent 16px),
        linear-gradient(90deg, #e8e6e4, #f0f4f9 30%, #dbe8f6 45%, #eff7fb 80%, #d7e9f0);
}

.quick,
.info {
    display: flex;
    align-items: center;
    height: 18px;
    border: 1px solid #777;
    background: linear-gradient(#969696, #7a7a7a);
}

.quick {
    width: 173px;
    padding-left: 3px;
}

.quick button {
    width: 19px;
}

.quick .more {
    flex: 1;
    font-size: 9px;
    color: #111;
}

.pale {
    opacity: .6;
}

.drop::after {
    content: "";
    border: 2px solid transparent;
    border-top: 3px solid #444;
    border-bottom: 0;
}

.quick button.drop,
.info button.drop {
    width: 9px;
}

.titlebar h1 {
    flex: 1;
    margin: 0;
    padding: 0 0 5px 10px;
    font-size: 10px;
    font-weight: normal;
    line-height: 14px;
    text-align: center;
    color: #222;
}

.info {
    width: 355px;
}

.info button {
    width: 18px;
}

.info button.play {
    width: 9px;
    font-size: 6px;
    color: #111;
}

.info input {
    width: 144px;
    height: 16px;
    padding: 0 4px;
    border: 1px solid #999;
    background: #f2f2f2;
    font: italic 9px "Noto Sans CJK SC", sans-serif;
}

.info input::placeholder {
    color: #777;
}

.info button.login {
    flex: 1;
    justify-content: flex-start;
    gap: 3px;
    padding-left: 5px;
    color: #f0f0f0;
}

.login svg {
    color: #333;
}

.info button.about {
    width: 30px;
    padding-left: 8px;
}

.winbtns {
    display: flex;
    align-self: flex-start;
    height: 15px;
    margin-left: 16px;
    border: 1px solid #9aaab8;
    border-top: 0;
    border-radius: 0 0 4px 4px;
    color: #566370;
}

.winbtns button {
    width: 22px;
    border-right: 1px solid #b4c1cc;
}

.winbtns button.close {
    width: 36px;
    border-right: 0;
}

.appbtn {
    position: absolute;
    left: 7px;
    top: 7px;
    width: 32px;
    height: 32px;
    border: 1px solid #444;
    background: linear-gradient(#b4b4b4, #858585);
}

.appbtn svg {
    width: 30px;
    height: 30px;
}

.menubar {
    display: flex;
    align-items: center;
    gap: 18px;
    height: 17px;
    padding-left: 43px;
    background: linear-gradient(#858585, #5f5f5f);
    font-family: "Noto Sans CJK SC", sans-serif;
    color: #eee;
}

.docbtns {
    display: flex;
    gap: 2px;
    margin-left: auto;
    padding-right: 2px;
    color: #111;
}

.docbtns svg {
    width: 11px;
    height: 11px;
    stroke-width: 2;
}

.filetabs {
    display: flex;
    align-items: flex-end;
    height: 24px;
    padding: 0 0 3px 14px;
    border-bottom: 1px solid #444;
    background: linear-gradient(#8a8a8a, #979797);
}

.filetab {
    display: flex;
    align-items: center;
    justify-content: space-between;
    width: 106px;
    height: 18px;
    padding: 0 14px 0 11px;
    background: linear-gradient(#b5b5b5, #a2a2a2);
    clip-path: polygon(7% 0, 91% 0, 100% 100%, 0 100%);
    color: #111;
}

.filetab button {
    color: #666;
}

.addtab {
    width: 18px;
    height: 12px;
    margin-bottom: 2px;
    border: 1px solid #555;
    border-radius: 2px 6px 2px 6px;
    background: #858585;
    color: #555;
}

/* docked toolbars */
.bars {
    display: flex;
    gap: 10px;
    height: 21px;
    padding: 2px 0 2px 6px;
    background: #505050;
}

.second {
    height: 22px;
    gap: 9px;
    border-top: 1px solid #777;
}

.bar {
    display: flex;
    align-items: center;
    flex: none;
    background: #efefef;
    overflow: hidden;
}

.bar > button {
    width: 18px;
}

.bar > .drop {
    width: 10px;
}

.dim {
    color: #999;
}

.sep {
    flex: none;
    width: 6px;
    height: 15px;
    background: linear-gradient(#999, #999) center / 1px 100% no-repeat;
}

.combo {
    position: relative;
    display: flex;
    align-items: center;
    flex: none;
    height: 100%;
    border: 1px solid #ccc;
    background: #f5f5f5;
}

.combo::after {
    content: "";
    position: absolute;
    right: 4px;
    top: 7px;
    border: 3px solid transparent;
    border-top: 4px solid #999;
    border-bottom: 0;
}

.combo svg {
    width: 13px;
    height: 13px;
}

select {
    flex: 1;
    min-width: 0;
    padding: 0;
    border: none;
    background: none;
    appearance: none;
    font: inherit;
    color: #777;
}

.swatch {
    flex: none;
    width: 9px;
    height: 9px;
    border: 1px solid #333;
    background: #fff;
}

.stroke {
    flex: none;
    width: 47px;
    border-top: 1px solid #555;
}

.styles,
.props {
    flex: 1;
    min-width: 0;
}

.styles .combo {
    width: 95px;
    padding-left: 15px;
}

.styles .combo.cut {
    padding-left: 3px;
}

.workspace .combo {
    width: 140px;
    padding-left: 7px;
}

.layer > button:first-child {
    width: 20px;
}

.layer .combo {
    width: 237px;
    gap: 1px;
}

.layer select {
    padding-left: 3px;
}

.props {
    font-family: "Liberation Serif", serif;
}

.props .combo {
    width: 119px;
    gap: 3px;
    padding-left: 3px;
}

.props select {
    color: #444;
}

/* drawing area */
.work {
    display: flex;
    flex: 1;
    min-height: 0;
}

.tools {
    display: flex;
    flex-direction: column;
    justify-content: space-around;
    border-top: 6px solid #484848;
    background: #eee;
}

.tools button {
    width: 18px;
}

.draw {
    width: 18px;
    margin-top: 2px;
    padding-bottom: 3px;
}

.mtext {
    font-size: 15px;
    font-weight: 600;
    line-height: 14px;
    color: #222;
}

.view {
    display: grid;
    grid-template-columns: 1fr 16px;
    grid-template-rows: 1fr 13px;
    flex: 1;
    min-width: 0;
    margin-left: 5px;
    margin-top: 2px;
    border: 1px solid #a4a4a4;
    border-right: 0;
    border-bottom: 0;
    background: #f0f0f0;
}

.canvas {
    position: relative;
    background: #000;
    overflow: hidden;
}

.drawing {
    position: absolute;
    left: 0;
    top: 0;
    width: 721px;
    height: 329px;
}

.dynamic {
    position: absolute;
    left: 406px;
    top: 182px;
    display: flex;
    align-items: flex-start;
    color: #24246c;
}

.prompt {
    display: flex;
    align-items: center;
    justify-content: space-between;
    width: 105px;
    height: 18px;
    margin-right: 5px;
    padding: 0 2px 1px 3px;
    background: #c6c6e6;
    font-family: "Noto Sans CJK SC", sans-serif;
}

.prompt svg {
    width: 10px;
    height: 12px;
}

.dynamic input {
    width: 40px;
    height: 15px;
    padding: 0 2px;
    border: none;
    background: #fff;
    font: 10px "Open Sans", sans-serif;
    color: #111;
}

.caret {
    position: absolute;
    left: 130px;
    top: 1px;
    width: 1px;
    height: 13px;
    background: #000;
}

.dynamic output {
    width: 52px;
    height: 15px;
    padding-left: 3px;
    background: #b9badb;
    line-height: 15px;
}

.vscroll {
    display: flex;
    flex-direction: column;
    align-items: center;
    justify-content: space-between;
    padding: 0;
    background: #eee;
    color: #222;
}

.thumb {
    width: 12px;
    height: 12px;
    border: 1px solid #999;
    border-radius: 2px;
    background: linear-gradient(#fafafa, #ccc);
}

.vscroll .thumb {
    margin-top: 50px;
}

.layouts {
    grid-column: 1 / 3;
    display: flex;
    align-items: stretch;
    height: 13px;
    overflow: hidden;
    font-family: "Liberation Serif", "Noto Sans CJK SC", serif;
}

.steps {
    display: flex;
    width: 46px;
}

.steps button {
    width: 11px;
    border-right: 1px solid #bbb;
}

.steps svg {
    width: 10px;
    height: 10px;
}

.ltab {
    position: relative;
    width: 37px;
    color: #222;
}

/* slanted divider at the tab's right edge */
.ltab::after {
    content: "";
    position: absolute;
    right: 1px;
    top: 0;
    height: 13px;
    border-left: 1px solid #555;
    transform: skewX(-24deg);
}

.ltab.on {
    width: 34px;
    background: #000;
    color: #fff;
    clip-path: polygon(0 0, 100% 0, 88% 100%, 12% 100%);
}

.hscroll {
    display: flex;
    align-items: center;
    width: 162px;
    margin-left: auto;
    border-left: 1px solid #aaa;
    color: #222;
}

.hscroll button {
    width: 14px;
}

.hscroll .thumb {
    margin-left: 113px;
}

.hscroll.end {
    justify-content: space-between;
    width: 80px;
    margin-left: 0;
    margin-right: 16px;
}

.right {
    display: flex;
    flex-direction: column;
    width: 25px;
    padding: 2px 3px 0 4px;
    background: #505050;
}

.modify {
    flex: 1;
}

.order {
    height: 21px;
    border-top-width: 7px;
}

/* command line */
.command {
    display: flex;
    height: 51px;
    border-top: 4px solid #555;
}

.grip {
    display: flex;
    flex-direction: column;
    justify-content: space-around;
    align-items: center;
    width: 18px;
    padding-top: 8px;
    background: linear-gradient(90deg, #888, #666);
    color: #fff;
}

.lines {
    flex: 1;
    background: #fff;
    font-family: "Liberation Mono", "Noto Sans CJK SC", monospace;
    font-size: 11px;
    color: #222;
}

.lines p {
    margin: 0;
    white-space: pre;
}

.lines b {
    font-size: 10px;
    font-weight: normal;
}

.history {
    height: 28px;
    padding-left: 2px;
    border-bottom: 1px solid #999;
    line-height: 38px;
}

.current {
    display: flex;
    align-items: center;
    height: 19px;
    padding-left: 3px;
    line-height: 14px;
}

.current .drop {
    display: flex;
    align-items: center;
    width: 12px;
    padding-left: 3px;
}

.current a {
    background: #d9d9d9;
}

.current em {
    font-style: normal;
    font-weight: bold;
    color: #3c3cf0;
}

/* status bar */
.status {
    display: flex;
    height: 17px;
    padding-right: 2px;
    border-top: 1px solid #444;
    background: linear-gradient(#777, #999);
}

.coords {
    width: 174px;
    padding-left: 9px;
    border-right: 1px solid #666;
    font: 8px/16px "Liberation Mono", monospace;
    color: #222;
    background: linear-gradient(#999, #858585);
}

.toggles {
    display: flex;
    margin-right: 3px;
}

.toggles button {
    width: 18px;
    border-right: 1px solid #777;
    background: linear-gradient(#bbb, #999);
}

.toggles button.on {
    background: linear-gradient(#e4f6fc, #9bd6e8);
}

.modes {
    width: 247px;
}

.modes button {
    flex: 1;
}

.space {
    margin-left: auto;
    margin-right: 16px;
}

.toggles button.scale {
    width: 41px;
    font-family: "Liberation Serif", serif;
    font-size: 11px;
    color: #111;
}

.tri {
    margin-left: 2px;
    border: 3px solid transparent;
    border-top: 4px solid #111;
    border-bottom: 0;
}

.toggles button.wide {
    width: 24px;
}

.toggles button.drop {
    width: 10px;
}

.sizer {
    width: 8px;
    height: 9px;
    margin-top: 7px;
    background: radial-gradient(circle, #eee 1px, transparent 1px) 0 0 / 3px 3px;
    clip-path: polygon(100% 0, 100% 100%, 0 100%);
}

.marks {
    position: absolute;
    left: 0;
    top: 0;
    width: 800px;
    height: 528px;
    stroke: #fb3a3c;
    stroke-width: 5;
    stroke-linecap: round;
    stroke-linejoin: round;
    pointer-events: none;
}
```
